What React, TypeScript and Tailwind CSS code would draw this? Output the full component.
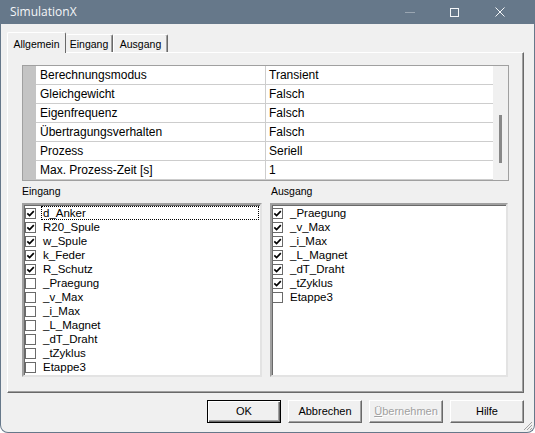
import React from 'react';

const props: [string, string][] = [
  ['Berechnungsmodus', 'Transient'],
  ['Gleichgewicht', 'Falsch'],
  ['Eigenfrequenz', 'Falsch'],
  ['Übertragungsverhalten', 'Falsch'],
  ['Prozess', 'Seriell'],
  ['Max. Prozess-Zeit [s]', '1'],
];

const eingang: [string, boolean][] = [
  ['d_Anker', true],
  ['R20_Spule', true],
  ['w_Spule', true],
  ['k_Feder', true],
  ['R_Schutz', true],
  ['_Praegung', false],
  ['_v_Max', false],
  ['_i_Max', false],
  ['_L_Magnet', false],
  ['_dT_Draht', false],
  ['_tZyklus', false],
  ['Etappe3', false],
];

const ausgang: [string, boolean][] = [
  ['_Praegung', true],
  ['_v_Max', true],
  ['_i_Max', true],
  ['_L_Magnet', true],
  ['_dT_Draht', true],
  ['_tZyklus', true],
  ['Etappe3', false],
];

function Check({ on }: { on: boolean }) {
  return (
    <span className="flex h-[11px] w-[11px] shrink-0 items-center justify-center border border-[#6a6a6a] bg-white">
      {on && (
        <svg viewBox="0 0 9 9" className="h-[9px] w-[9px]">
          <path d="M1.3 4.3 L3.6 6.6 L7.8 2.2" fill="none" stroke="black" strokeWidth="1.7" />
        </svg>
      )}
    </span>
  );
}

function CheckList({ items, focusFirst, inset }: { items: [string, boolean][]; focusFirst?: boolean; inset: string }) {
  return (
    <div className="h-[174px] border-2 border-t-[#a0a0a0] border-l-[#a0a0a0] border-r-[#e3e3e3] border-b-[#e3e3e3] bg-white pt-[1px] shadow-[inset_1px_1px_0_#696969]">
      {items.map(([name, on], i) => (
        <div key={name} className="flex h-[14px] items-center">
          <span className={inset}>
            <Check on={on} />
          </span>
          <span
            className={`ml-[5px] mr-[1px] flex-1 border px-[1px] leading-[12px] ${
              focusFirst && i === 0 ? 'border-dotted border-black' : 'border-transparent'
            }`}
          >
            {name}
          </span>
        </div>
      ))}
    </div>
  );
}

function Button({ label, variant }: { label: React.ReactNode; variant?: 'default' | 'disabled' }) {
  const frame =
    variant === 'default'
      ? 'border border-black shadow-[inset_1px_1px_0_white,inset_-1px_-1px_0_#696969,inset_-2px_-2px_0_#a0a0a0]'
      : 'border border-t-white border-l-white border-r-[#696969] border-b-[#696969] shadow-[inset_-1px_-1px_0_#a0a0a0]';
  return (
    <div
      className={`flex h-[23px] w-[74px] items-center justify-center bg-[#f0f0f0] text-[11px] ${frame} ${
        variant === 'disabled' ? 'text-[#a0a0a0] [text-shadow:1px_1px_0_white]' : 'text-black'
      }`}
    >
      {label}
    </div>
  );
}

export default function App() {
  return (
    <div className="relative h-[433px] w-[535px] overflow-hidden bg-white" style={{ fontFamily: '"Liberation Sans", Arial, sans-serif' }}>
      <div className="flex h-[433px] w-[535px] flex-col rounded-b-[8px] border-x border-b border-[#66788a] bg-[#f0f0f0]">
        {/* Title bar */}
        <div className="flex h-[24px] shrink-0 items-center bg-[#66788a] pl-[9px] text-[12px] text-[#f4f6f8]" style={{ fontFamily: '"Open Sans", "Noto Sans", sans-serif' }}>
          <span>SimulationX</span>
          <div className="ml-auto flex items-center pr-[29px]">
            <span className="h-px w-[10px] bg-[#9aa6b2]" />
            <span className="ml-[35px] h-[9px] w-[9px] border border-[#f4f6f8]" />
            <svg viewBox="0 0 10 10" className="ml-[36px] h-[10px] w-[10px]">
              <path d="M0.5 0.5 L9.5 9.5 M9.5 0.5 L0.5 9.5" stroke="#f4f6f8" strokeWidth="1" />
            </svg>
          </div>
        </div>

        {/* Tabs */}
        <div className="flex h-[28px] shrink-0 items-end pl-[6px] text-[10.5px]">
          <div className="relative z-10 mb-[-1px] flex h-[21px] w-[59px] items-start justify-center rounded-t-[2px] border-l border-r border-t border-l-white border-t-white border-r-[#696969] bg-[#f0f0f0] pt-[4px]">
            Allgemein
          </div>
          <div className="flex h-[18px] w-[47px] items-start justify-center rounded-t-[2px] border-r border-t border-t-white border-r-[#696969] pt-[2px] shadow-[inset_-1px_0_0_#a0a0a0]">
            Eingang
          </div>
          <div className="flex h-[18px] w-[55px] items-start justify-center rounded-t-[2px] border-l border-r border-t border-l-white border-t-white border-r-[#696969] pt-[2px] shadow-[inset_-1px_0_0_#a0a0a0]">
            Ausgang
          </div>
        </div>

        {/* Tab panel */}
        <div className="ml-[6px] h-[341px] w-[517px] shrink-0 border border-t-white border-l-white border-r-[#696969] border-b-[#696969] pl-[14px] pt-[12px] shadow-[inset_-1px_-1px_0_#a0a0a0]">
          {/* Property grid */}
          <div className="flex h-[116px] w-[487px] border border-[#a0a0a0] text-[12px]">
            <div className="w-[13px] bg-[#c4c4c4]" />
            <div className="w-[457px] bg-white">
              {props.map(([k, v]) => (
                <div key={k} className="flex h-[19px] border-b border-[#cdcdcd]">
                  <div className="flex w-[230px] items-center border-r border-[#cdcdcd] pl-[4px]">{k}</div>
                  <div className="flex flex-1 items-center pl-[3px]">{v}</div>
                </div>
              ))}
            </div>
            <div className="flex flex-1 justify-center bg-[#f0f0f0] pt-[49px]">
              <span className="h-[48px] w-[3px] bg-[#888888]" />
            </div>
          </div>

          {/* Lists */}
          <div className="mt-[4px] grid grid-cols-[240px_238px] gap-x-[8px] text-[11.5px]">
            <div className="h-[18px] text-[10.5px] leading-[13px]">Eingang</div>
            <div className="h-[18px] pl-[1px] text-[10.5px] leading-[13px]">Ausgang</div>
            <CheckList items={eingang} focusFirst inset="ml-[1px]" />
            <CheckList items={ausgang} inset="ml-0" />
          </div>
        </div>

        {/* Buttons */}
        <div className="mt-[7px] flex justify-end gap-[7px] pr-[10px]">
          <Button label="OK" variant="default" />
          <Button label="Abbrechen" />
          <Button label={<span><span className="underline">Ü</span>bernehmen</span>} variant="disabled" />
          <Button label="Hilfe" />
        </div>
      </div>

      {/* resize grip */}
      <svg viewBox="0 0 10 10" className="absolute bottom-[2px] right-[2px] h-[10px] w-[10px]">
        <path d="M9 1 L1 9 M9 4 L4 9 M9 7 L7 9" stroke="#a0a0a0" strokeWidth="1" />
      </svg>
    </div>
  );
}
